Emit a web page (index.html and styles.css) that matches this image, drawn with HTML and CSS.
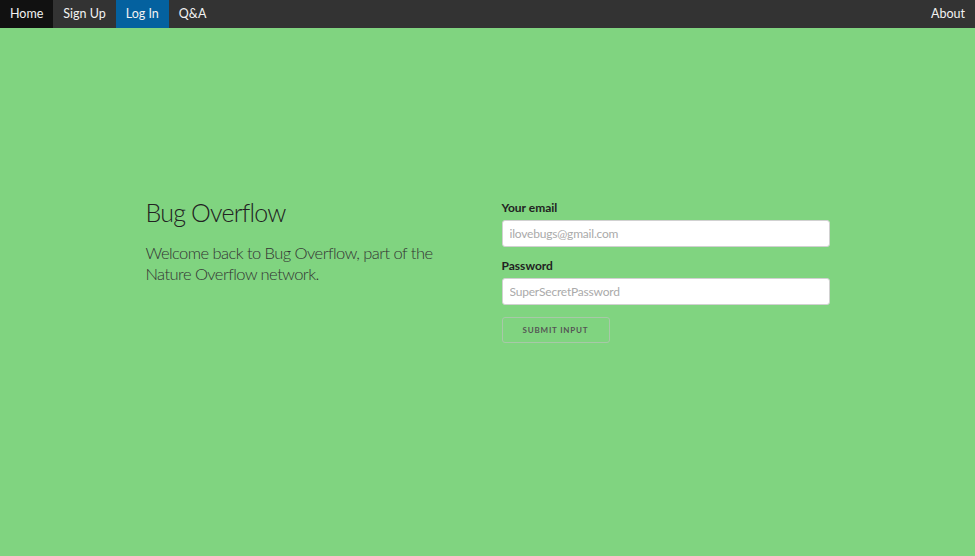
FILE: index.html
```html
<!DOCTYPE html>
<html lang="en">
<head>
<meta charset="utf-8">
<title>Bug Overflow - Log In</title>
<link rel="stylesheet" href="styles.css">
</head>
<body>
<nav class="topnav">
  <a class="nav-link nav-home" href="#">Home</a>
  <a class="nav-link" href="#">Sign Up</a>
  <a class="nav-link nav-active" href="#">Log In</a>
  <a class="nav-link" href="#">Q&amp;A</a>
  <a class="nav-link nav-about" href="#">About</a>
</nav>
<main class="page">
  <div class="container">
    <section class="intro">
      <h3 class="title">Bug Overflow</h3>
      <p class="lead">Welcome back to Bug Overflow, part of the Nature Overflow network.</p>
    </section>
    <form class="login-form">
      <label class="field-label" for="email">Your email</label>
      <input class="field-input" type="email" id="email" placeholder="ilovebugs@gmail.com">
      <label class="field-label" for="password">Password</label>
      <input class="field-input field-last" type="text" id="password" placeholder="SuperSecretPassword">
      <button class="submit-btn" type="button">Submit Input</button>
    </form>
  </div>
</main>
</body>
</html>
```

FILE: styles.css
```css
* { box-sizing: border-box; }
html, body { margin: 0; padding: 0; height: 100%; }
body {
  background: #80d480;
  font-family: Lato, "Liberation Sans", sans-serif;
  color: #222;
}
.topnav {
  display: flex;
  height: 28px;
  background: #333;
}
.nav-link {
  display: block;
  padding: 0 10px;
  line-height: 28px;
  font-size: 12.5px;
  color: #f2f2f2;
  text-decoration: none;
}
.nav-home { background: #111; }
.nav-active { background: #04619f; }
.nav-about { margin-left: auto; padding-right: 10px; }
.page { padding-top: 172px; }
.container {
  width: 684px;
  margin: 0 auto;
  display: grid;
  grid-template-columns: 328px 328px;
  column-gap: 28px;
}
.title {
  margin: 0;
  font-size: 25px;
  line-height: 24px;
  font-weight: 300;
  color: #222;
  letter-spacing: -0.8px;
}
.lead {
  margin: 19px 0 0;
  font-size: 16.5px;
  line-height: 21px;
  font-weight: 300;
  letter-spacing: -0.55px;
  color: #333;
}
.login-form { display: flex; flex-direction: column; align-items: flex-start; }
.field-label {
  display: block;
  font-size: 12px;
  line-height: 15px;
  font-weight: 700;
  color: #222;
  margin-bottom: 5px;
}
.field-input {
  width: 328px;
  height: 27px;
  margin: 0 0 11px;
  padding: 0 7px;
  border: 1px solid #d1d1d1;
  border-radius: 3px;
  background: #fff;
  font-family: inherit;
  font-size: 12px;
  letter-spacing: -0.2px;
  color: #333;
}
.field-last { margin-bottom: 12px; }
.field-input::placeholder { color: #aaa; }
.submit-btn {
  width: 108px;
  height: 26px;
  padding: 0;
  border: 1px solid #a8c8a8;
  border-radius: 3px;
  background: transparent;
  font-family: inherit;
  font-size: 8px;
  font-weight: 700;
  letter-spacing: 0.8px;
  text-transform: uppercase;
  color: #555;
}
```
